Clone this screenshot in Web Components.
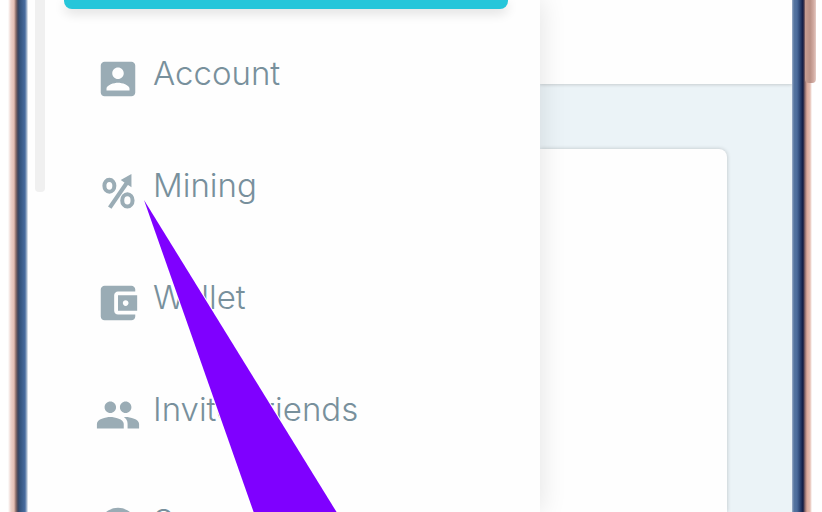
<!DOCTYPE html>
<html lang="en">
<head>
<meta charset="utf-8">
<meta name="viewport" content="width=device-width, initial-scale=1">
<title>Menu</title>
<style>
  body {
    margin: 0;
    height: 100vh;
    overflow: hidden;
    background: #fff;
    font-family: Inter, "Liberation Sans", sans-serif;
  }
</style>
</head>
<body>
<phone-frame>
  <side-drawer slot="drawer">
    <menu-item icon="account">Account</menu-item>
    <menu-item icon="mining">Mining</menu-item>
    <menu-item icon="wallet">Wallet</menu-item>
    <menu-item icon="friends">Invite Friends</menu-item>
    <menu-item icon="support">Support</menu-item>
  </side-drawer>
  <page-content></page-content>
</phone-frame>
<pointer-arrow></pointer-arrow>

<script>
class PhoneFrame extends HTMLElement {
  constructor() {
    super();
    this.attachShadow({ mode: 'open' });
  }

  connectedCallback() {
    this.shadowRoot.innerHTML = `
      <style>
        :host {
          display: flex;
          position: relative;
          height: 100%;
          padding: 0 10px 0 8px;
          box-sizing: border-box;
          overflow: hidden;
        }

        .edge {
          flex: none;
          width: 20px;
        }

        .left {
          background: linear-gradient(to right, #fff, #edd2cb 3px, #e5bfb4 6px, #8b6d69 8px, #3b4560 10px, #35557f 12px, #4b70a4 17px, #b7c7dc 19px, #fff 20px);
        }

        .right {
          background: linear-gradient(to right, #9fb0c9, #55749f 2px, #4b6b9b 5px, #2b4473 8px, #101a42 11px, #8d6b6b 13px, #dba99b 15px, #e5beb2 18px, #fff 20px);
        }

        .screen {
          display: flex;
          flex: 1;
          min-width: 0;
        }

        .power {
          position: absolute;
          top: 0;
          right: 6px;
          width: 11px;
          height: 83px;
          border-radius: 0 0 4px 4px;
          background: linear-gradient(to right, #c69d92, #b98f84 5px, #d4aea5 9px, #e5ccc6);
        }
      </style>

      <div class="edge left"></div>
      <div class="screen">
        <slot name="drawer"></slot>
        <slot></slot>
      </div>
      <div class="edge right"></div>
      <div class="power"></div>
    `;
  }
}

class SideDrawer extends HTMLElement {
  constructor() {
    super();
    this.attachShadow({ mode: 'open' });
  }

  connectedCallback() {
    this.shadowRoot.innerHTML = `
      <style>
        :host {
          display: flex;
          flex: 0 0 67%;
          position: relative;
          z-index: 1;
          padding: 0 32px 0 7px;
          box-sizing: border-box;
          background: #fefefe;
          box-shadow: 2px 0 24px rgba(0, 0, 0, 0.1);
        }

        .scrollbar {
          flex: none;
          width: 10px;
          height: 192px;
          border-radius: 0 0 4px 4px;
          background: #f0f0f0;
        }

        .column {
          flex: 1;
          min-width: 0;
          margin-left: 19px;
        }

        .banner {
          height: 9px;
          border-radius: 0 0 8px 8px;
          background: #26c6da;
          box-shadow: 0 4px 12px rgba(0, 0, 0, 0.14);
        }

        nav {
          padding: 14px 0 0 31px;
        }
      </style>

      <div class="scrollbar"></div>
      <div class="column">
        <div class="banner"></div>
        <nav><slot></slot></nav>
      </div>
    `;
  }
}

const icons = {
  account: '<path d="M3 5v14c0 1.1.9 2 2 2h14c1.1 0 2-.9 2-2V5c0-1.1-.9-2-2-2H5c-1.1 0-2 .9-2 2zm12 4c0 1.66-1.34 3-3 3s-3-1.34-3-3 1.34-3 3-3 3 1.34 3 3zm-9 8c0-2 4-3.1 6-3.1s6 1.1 6 3.1v1H6z"/>',
  mining: '<g fill="none" stroke="currentColor" stroke-width="2.1"><ellipse cx="7.5" cy="9.3" rx="2.6" ry="3.1"/><ellipse cx="16.9" cy="16.9" rx="2.7" ry="3.2"/><path d="M7.7 20.7 17.4 6.6" stroke-width="2.2"/></g><path d="M19 3.1v6.9l-5.6-3.8z"/>',
  wallet: '<path d="M21 18v1c0 1.1-.9 2-2 2H5c-1.11 0-2-.9-2-2V5c0-1.1.89-2 2-2h14c1.1 0 2 .9 2 2v1h-9c-1.11 0-2 .9-2 2v8c0 1.1.89 2 2 2zm-9-2h10V8H12zm4-2.5c-.83 0-1.5-.67-1.5-1.5s.67-1.5 1.5-1.5 1.5.67 1.5 1.5-.67 1.5-1.5 1.5z"/>',
  friends: '<path d="M16 11c1.66 0 2.99-1.34 2.99-3S17.66 5 16 5s-3 1.34-3 3 1.34 3 3 3zm-8 0c1.66 0 2.99-1.34 2.99-3S9.66 5 8 5 5 6.34 5 8s1.34 3 3 3zm0 2c-2.33 0-7 1.17-7 3.5V19h14v-2.5c0-2.33-4.67-3.5-7-3.5zm8 0c-.29 0-.62.02-.97.05 1.16.84 1.97 1.97 1.97 3.45V19h6v-2.5c0-2.33-4.67-3.5-7-3.5z"/>',
  support: '<path d="M12 2C6.48 2 2 6.48 2 12s4.48 10 10 10 10-4.48 10-10S17.52 2 12 2zm1 17h-2v-2h2zm2.07-7.75-.9.92C13.45 12.9 13 13.5 13 15h-2v-.5c0-1.1.45-2.1 1.17-2.83l1.24-1.26A2 2 0 1 0 10 9H8a4 4 0 1 1 7.07 2.25z"/>'
};

class MenuItem extends HTMLElement {
  constructor() {
    super();
    this.attachShadow({ mode: 'open' });
  }

  connectedCallback() {
    const icon = this.getAttribute('icon');

    this.shadowRoot.innerHTML = `
      <style>
        :host {
          display: block;
        }

        a {
          display: flex;
          align-items: center;
          gap: 12px;
          height: 112px;
          color: #78909c;
          font-size: 33px;
          font-weight: 300;
          line-height: 40px;
          text-decoration: none;
          white-space: nowrap;
        }

        svg {
          flex: none;
          width: 46px;
          height: 46px;
          fill: currentColor;
          color: #9aacb5;
        }

        span {
          padding-bottom: 12px;
        }
      </style>

      <a href="#${icon}">
        <svg viewBox="0 0 24 24" aria-hidden="true">${icons[icon]}</svg>
        <span><slot></slot></span>
      </a>
    `;
  }
}

class PageContent extends HTMLElement {
  constructor() {
    super();
    this.attachShadow({ mode: 'open' });
  }

  connectedCallback() {
    this.shadowRoot.innerHTML = `
      <style>
        :host {
          display: flex;
          flex-direction: column;
          flex: 1;
          min-width: 0;
          background: #ebf3f7;
        }

        header {
          flex: none;
          height: 84px;
          background: #fefefe;
          box-shadow: 0 1px 3px rgba(0, 0, 0, 0.16);
        }

        .card {
          flex: 1;
          margin: 65px 65px 0 0;
          border-radius: 0 8px 0 0;
          background: #fefefe;
          box-shadow: 0 0 4px rgba(0, 0, 0, 0.2);
        }
      </style>

      <header></header>
      <div class="card"></div>
    `;
  }
}

// Callout that points at the Mining entry
class PointerArrow extends HTMLElement {
  constructor() {
    super();
    this.attachShadow({ mode: 'open' });
  }

  connectedCallback() {
    this.shadowRoot.innerHTML = `
      <style>
        :host {
          display: block;
          position: absolute;
          top: 200px;
          left: 144px;
          z-index: 2;
          pointer-events: none;
        }

        svg {
          display: block;
          width: 194px;
          height: 312px;
        }
      </style>

      <svg viewBox="0 0 194 312" aria-hidden="true">
        <path d="M0 0 111 316H195z" fill="#7f00ff" stroke="#fff" stroke-width="2" paint-order="stroke"/>
      </svg>
    `;
  }
}

customElements.define('phone-frame', PhoneFrame);
customElements.define('side-drawer', SideDrawer);
customElements.define('menu-item', MenuItem);
customElements.define('page-content', PageContent);
customElements.define('pointer-arrow', PointerArrow);
</script>
</body>
</html>
